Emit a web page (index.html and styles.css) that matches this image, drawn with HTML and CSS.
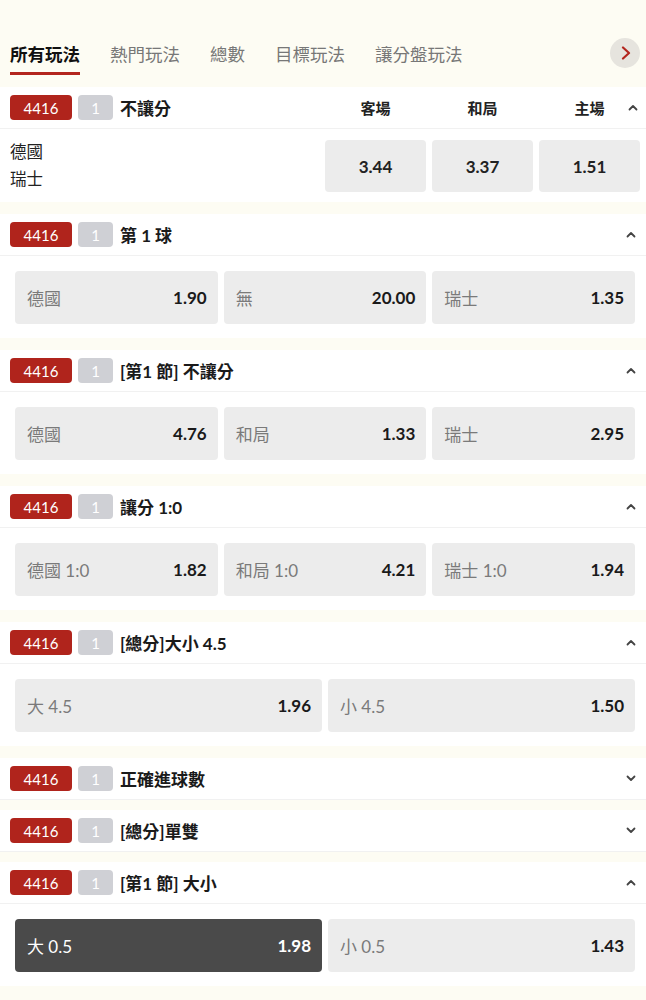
FILE: index.html
```html
<!DOCTYPE html>
<html lang="zh-Hant">
<head>
    <meta charset="UTF-8">
    <meta name="viewport" content="width=device-width, initial-scale=1.0">
    <title>所有玩法</title>
    <link rel="stylesheet" href="styles.css">
</head>
<body>
    <!-- 玩法分類 -->
    <nav class="tabs">
        <a class="tab active">所有玩法</a>
        <a class="tab">熱門玩法</a>
        <a class="tab">總數</a>
        <a class="tab">目標玩法</a>
        <a class="tab">讓分盤玩法</a>
        <button class="tab-next" type="button">
            <svg width="12" height="14" viewBox="0 0 12 14"><polyline points="3,1.5 9,7 3,12.5" fill="none" stroke="#b3261e" stroke-width="2.2" stroke-linecap="round" stroke-linejoin="round"/></svg>
        </button>
    </nav>

    <!-- 不讓分 -->
    <section class="market">
        <div class="mk-head mk-head-cols">
            <span class="badge-id">4416</span>
            <span class="badge-no">1</span>
            <span class="mk-title">不讓分</span>
            <div class="col-labels">
                <span>客場</span>
                <span>和局</span>
                <span>主場</span>
            </div>
            <svg class="caret caret-abs" width="10" height="7" viewBox="0 0 10 7"><polyline points="1.5,5.5 5,2 8.5,5.5" fill="none" stroke="#444" stroke-width="1.8" stroke-linecap="round" stroke-linejoin="round"/></svg>
        </div>
        <div class="mk-body-1x2">
            <div class="teams">
                <div>德國</div>
                <div>瑞士</div>
            </div>
            <button class="odd-c">3.44</button>
            <button class="odd-c">3.37</button>
            <button class="odd-c">1.51</button>
        </div>
    </section>

    <section class="market">
        <div class="mk-head">
            <span class="badge-id">4416</span>
            <span class="badge-no">1</span>
            <span class="mk-title">第 1 球</span>
            <svg class="caret" width="10" height="7" viewBox="0 0 10 7"><polyline points="1.5,5.5 5,2 8.5,5.5" fill="none" stroke="#444" stroke-width="1.8" stroke-linecap="round" stroke-linejoin="round"/></svg>
        </div>
        <div class="mk-body">
            <button class="odd"><span class="lbl">德國</span><b>1.90</b></button>
            <button class="odd"><span class="lbl">無</span><b>20.00</b></button>
            <button class="odd"><span class="lbl">瑞士</span><b>1.35</b></button>
        </div>
    </section>

    <section class="market">
        <div class="mk-head">
            <span class="badge-id">4416</span>
            <span class="badge-no">1</span>
            <span class="mk-title">[第1 節] 不讓分</span>
            <svg class="caret" width="10" height="7" viewBox="0 0 10 7"><polyline points="1.5,5.5 5,2 8.5,5.5" fill="none" stroke="#444" stroke-width="1.8" stroke-linecap="round" stroke-linejoin="round"/></svg>
        </div>
        <div class="mk-body">
            <button class="odd"><span class="lbl">德國</span><b>4.76</b></button>
            <button class="odd"><span class="lbl">和局</span><b>1.33</b></button>
            <button class="odd"><span class="lbl">瑞士</span><b>2.95</b></button>
        </div>
    </section>

    <section class="market">
        <div class="mk-head">
            <span class="badge-id">4416</span>
            <span class="badge-no">1</span>
            <span class="mk-title">讓分 1:0</span>
            <svg class="caret" width="10" height="7" viewBox="0 0 10 7"><polyline points="1.5,5.5 5,2 8.5,5.5" fill="none" stroke="#444" stroke-width="1.8" stroke-linecap="round" stroke-linejoin="round"/></svg>
        </div>
        <div class="mk-body">
            <button class="odd"><span class="lbl">德國 1:0</span><b>1.82</b></button>
            <button class="odd"><span class="lbl">和局 1:0</span><b>4.21</b></button>
            <button class="odd"><span class="lbl">瑞士 1:0</span><b>1.94</b></button>
        </div>
    </section>

    <section class="market">
        <div class="mk-head">
            <span class="badge-id">4416</span>
            <span class="badge-no">1</span>
            <span class="mk-title">[總分]大小 4.5</span>
            <svg class="caret" width="10" height="7" viewBox="0 0 10 7"><polyline points="1.5,5.5 5,2 8.5,5.5" fill="none" stroke="#444" stroke-width="1.8" stroke-linecap="round" stroke-linejoin="round"/></svg>
        </div>
        <div class="mk-body">
            <button class="odd"><span class="lbl">大 4.5</span><b>1.96</b></button>
            <button class="odd"><span class="lbl">小 4.5</span><b>1.50</b></button>
        </div>
    </section>

    <!-- 收合的玩法 -->
    <section class="market collapsed">
        <div class="mk-head">
            <span class="badge-id">4416</span>
            <span class="badge-no">1</span>
            <span class="mk-title">正確進球數</span>
            <svg class="caret" width="10" height="7" viewBox="0 0 10 7"><polyline points="1.5,1.5 5,5 8.5,1.5" fill="none" stroke="#444" stroke-width="1.8" stroke-linecap="round" stroke-linejoin="round"/></svg>
        </div>
    </section>

    <section class="market collapsed">
        <div class="mk-head">
            <span class="badge-id">4416</span>
            <span class="badge-no">1</span>
            <span class="mk-title">[總分]單雙</span>
            <svg class="caret" width="10" height="7" viewBox="0 0 10 7"><polyline points="1.5,1.5 5,5 8.5,1.5" fill="none" stroke="#444" stroke-width="1.8" stroke-linecap="round" stroke-linejoin="round"/></svg>
        </div>
    </section>

    <section class="market">
        <div class="mk-head">
            <span class="badge-id">4416</span>
            <span class="badge-no">1</span>
            <span class="mk-title">[第1 節] 大小</span>
            <svg class="caret" width="10" height="7" viewBox="0 0 10 7"><polyline points="1.5,5.5 5,2 8.5,5.5" fill="none" stroke="#444" stroke-width="1.8" stroke-linecap="round" stroke-linejoin="round"/></svg>
        </div>
        <div class="mk-body">
            <button class="odd selected"><span class="lbl">大 0.5</span><b>1.98</b></button>
            <button class="odd"><span class="lbl">小 0.5</span><b>1.43</b></button>
        </div>
    </section>
</body>
</html>
```

FILE: styles.css
```css
/* 基本 */
body {
    margin: 0;
    background-color: #fdfcf3;
    font-family: "Lato", "Noto Sans CJK TC", sans-serif;
    color: #222;
}

button {
    font-family: inherit;
    border: none;
    cursor: pointer;
}

/* 玩法分類 */
.tabs {
    display: flex;
    align-items: flex-start;
    gap: 30px;
    padding: 42px 6px 12px 10px;
}

.tab {
    font-size: 17.5px;
    line-height: 26px;
    color: #777;
    padding-bottom: 4px;
    border-bottom: 3px solid transparent;
    white-space: nowrap;
}

.tab.active {
    color: #111;
    font-weight: bold;
    border-bottom-color: #b3261e;
}

.tab-next {
    margin-left: auto;
    margin-top: -4px;
    width: 30px;
    height: 30px;
    border-radius: 50%;
    background-color: #e6e4de;
    display: flex;
    align-items: center;
    justify-content: center;
    padding: 0 0 0 2px;
}

/* 玩法區塊 */
.market {
    background-color: #fff;
    margin-bottom: 12px;
}

.market.collapsed {
    margin-bottom: 10px;
}

.mk-head {
    position: relative;
    display: flex;
    align-items: center;
    height: 41px;
    padding: 0 10px;
    border-bottom: 1px solid #f1f1f1;
}

.mk-head-cols {
    padding-right: 6px;
}

.badge-id {
    width: 62px;
    height: 25px;
    border-radius: 4px;
    background-color: #b0241c;
    color: #fff;
    font-size: 15px;
    display: flex;
    align-items: center;
    justify-content: center;
}

.badge-no {
    width: 35px;
    height: 25px;
    margin-left: 6px;
    border-radius: 4px;
    background-color: #cfd0d5;
    color: #fff;
    font-size: 15px;
    display: flex;
    align-items: center;
    justify-content: center;
}

.mk-title {
    margin-left: 7px;
    font-size: 17px;
    font-weight: bold;
    color: #1a1a1a;
    flex: 1;
}

.caret-abs {
    position: absolute;
    right: 8px;
    top: 17px;
}

.col-labels {
    width: 315px;
    display: grid;
    grid-template-columns: repeat(3, 1fr);
    gap: 6px;
    text-align: center;
    font-size: 15px;
    font-weight: bold;
    color: #222;
}

/* 不讓分 內容 */
.mk-body-1x2 {
    display: flex;
    align-items: center;
    gap: 6px;
    padding: 10px 6px 9px 10px;
}

.teams {
    flex: 1;
    font-size: 16.5px;
    line-height: 27px;
    color: #222;
}

.odd-c {
    width: 101px;
    height: 52px;
    border-radius: 4px;
    background-color: #ececec;
    font-size: 17px;
    font-weight: bold;
    color: #222;
}

/* 賠率按鈕 */
.mk-body {
    display: flex;
    gap: 6px;
    padding: 15px 11px 14px 15px;
}

.odd {
    flex: 1;
    height: 53px;
    border-radius: 4px;
    background-color: #ececec;
    display: flex;
    align-items: center;
    justify-content: space-between;
    padding: 0 11px 0 12px;
    font-size: 17px;
}

.odd .lbl {
    color: #7a7a7a;
}

.odd b {
    color: #1a1a1a;
}

.odd.selected {
    background-color: #4a4a4a;
}

.odd.selected .lbl,
.odd.selected b {
    color: #fff;
}
```
